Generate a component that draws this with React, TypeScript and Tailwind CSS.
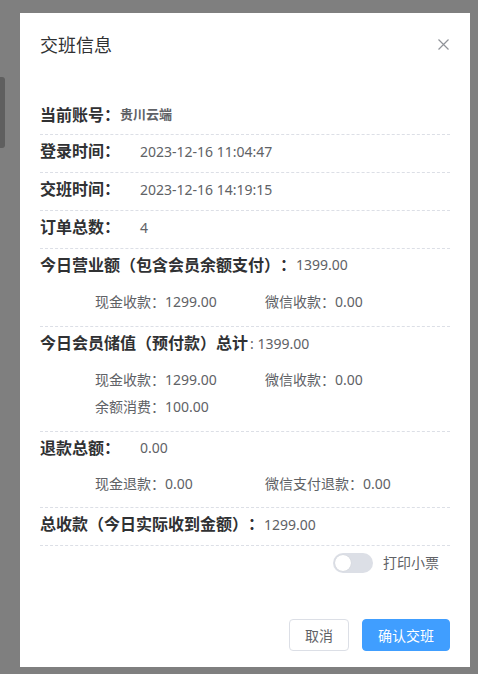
import React from "react";

const font = { fontFamily: '"Noto Sans", "Noto Sans CJK SC", sans-serif' };

function Row({ label, value }: { label: string; value: string }) {
  return (
    <div className="flex h-[38px] items-center border-b border-dashed border-[#dcdfe6] pb-[5px]">
      <span className="w-[100px] text-[16px] font-bold text-[#303133]">{label}</span>
      <span className="text-[14px] text-[#606266]">{value}</span>
    </div>
  );
}

function Sub({ items }: { items: [string, string][] }) {
  return (
    <div className="flex h-[27px] items-center pb-[2px] pl-[55px] text-[14px] text-[#606266]">
      {items.map(([k, v], i) => (
        <span key={i} className={i === 0 ? "w-[170px]" : ""}>
          {k}：{v}
        </span>
      ))}
    </div>
  );
}

export default function App() {
  return (
    <div
      className="relative h-[674px] w-full overflow-hidden bg-[#7f7f7f] [text-spacing-trim:space-all]"
      style={font}
    >
      {/* page element peeking out behind the overlay */}
      <div className="absolute left-0 top-[77px] h-[71px] w-[5px] rounded-r-[3px] bg-[#5f5f5f]" />

      <div className="relative ml-[20px] pt-[13px]">
        <div className="flex h-[654px] w-[450px] flex-col bg-white">
          {/* header */}
          <div className="relative px-[20px] pb-[10px] pt-[20px]">
            <span className="text-[18px] leading-[24px] text-[#303133]">交班信息</span>
            <button className="absolute right-[21px] top-[26px] text-[#909399]">
              <svg width="11" height="11" viewBox="0 0 11 11" fill="none" stroke="currentColor" strokeWidth="1.2">
                <path d="M0.5 0.5 L10.5 10.5 M10.5 0.5 L0.5 10.5" />
              </svg>
            </button>
          </div>

          {/* body */}
          <div className="px-[20px] pb-[30px] pt-[30px]">
            <div className="flex h-[37px] items-center border-b border-dashed border-[#dcdfe6] pb-[2px]">
              <span className="text-[16px] font-bold text-[#303133]">当前账号：</span>
              <span className="text-[13px] font-bold text-[#606266]">贵川云端</span>
            </div>
            <Row label="登录时间：" value="2023-12-16 11:04:47" />
            <Row label="交班时间：" value="2023-12-16 14:19:15" />
            <Row label="订单总数：" value="4" />

            <div className="border-b border-dashed border-[#dcdfe6]">
              <div className="flex h-[36px] items-center pb-[5px]">
                <span className="text-[16px] font-bold text-[#303133]">今日营业额（包含会员余额支付）：</span>
                <span className="text-[14px] text-[#606266]">1399.00</span>
              </div>
              <div className="pb-[10px] pt-[4px]">
                <Sub items={[["现金收款", "1299.00"], ["微信收款", "0.00"]]} />
              </div>
            </div>

            <div className="border-b border-dashed border-[#dcdfe6]">
              <div className="flex h-[36px] items-center pb-[4px]">
                <span className="text-[16px] font-bold text-[#303133]">今日会员储值（预付款）总计</span>
                <span className="ml-[2px] text-[14px] text-[#606266]">:&nbsp;1399.00</span>
              </div>
              <div className="pb-[10px] pt-[4px]">
                <Sub items={[["现金收款", "1299.00"], ["微信收款", "0.00"]]} />
                <Sub items={[["余额消费", "100.00"]]} />
              </div>
            </div>

            <div className="border-b border-dashed border-[#dcdfe6]">
              <div className="flex h-[36px] items-center pb-[5px]">
                <span className="w-[100px] text-[16px] font-bold text-[#303133]">退款总额：</span>
                <span className="text-[14px] text-[#606266]">0.00</span>
              </div>
              <div className="pb-[9px] pt-[3px]">
                <Sub items={[["现金退款", "0.00"], ["微信支付退款", "0.00"]]} />
              </div>
            </div>

            <div className="flex h-[38px] items-center border-b border-dashed border-[#dcdfe6] pb-[5px]">
              <span className="text-[16px] font-bold text-[#303133]">总收款（今日实际收到金额）：</span>
              <span className="text-[14px] text-[#606266]">1299.00</span>
            </div>

            <div className="flex items-center justify-end py-[6px] pr-[11px]">
              <div className="relative h-[20px] w-[40px] rounded-full bg-[#dcdfe6]">
                <div className="absolute left-[2px] top-[2px] h-[16px] w-[16px] rounded-full bg-white shadow-[0_0_1px_rgba(0,0,0,0.15)]" />
              </div>
              <span className="ml-[10px] text-[14px] text-[#606266]">打印小票</span>
            </div>
          </div>

          {/* footer */}
          <div className="flex justify-end gap-[13px] px-[20px] pt-[10px]">
            <button className="h-[32px] rounded-[4px] border border-[#dcdfe6] bg-white px-[15px] text-[14px] text-[#606266]">
              取消
            </button>
            <button className="h-[32px] rounded-[4px] border border-[#409eff] bg-[#409eff] px-[15px] text-[14px] text-white">
              确认交班
            </button>
          </div>
        </div>
      </div>
    </div>
  );
}
